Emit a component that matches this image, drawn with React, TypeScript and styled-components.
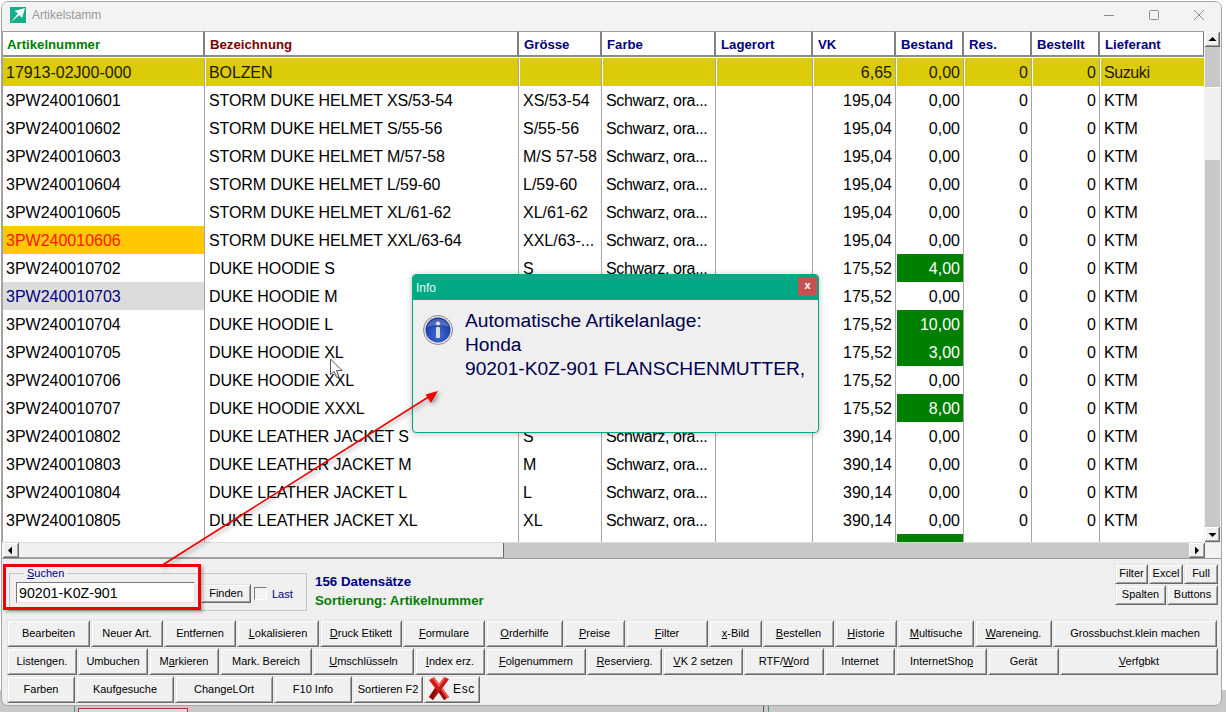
import React from 'react';
import styled, { createGlobalStyle } from 'styled-components';

const GlobalStyle = createGlobalStyle`
  html, body {
    margin: 0;
    padding: 0;
    background: #fff;
    font-family: "Liberation Sans", Arial, sans-serif;
  }
`;

const COLUMNS = '202px 314px 83px 114px 97px 83px 68px 68px 68px 105px';

const Page = styled.div`
  position: relative;
  width: 1226px;
  height: 712px;
  overflow: hidden;
  padding-top: 1px;
  box-sizing: border-box;
  background: linear-gradient(#fff 0, #fff 690px, #c8c8c8 690px);
`;

const Window = styled.div`
  box-sizing: border-box;
  width: 1221px;
  height: 705px;
  margin-left: 1px;
  display: flex;
  flex-direction: column;
  border: 1px solid #a6a6a6;
  border-radius: 7px;
  overflow: hidden;
  background: #efefef;
`;

const TitleBar = styled.div`
  height: 29px;
  box-sizing: border-box;
  flex: none;
  display: flex;
  align-items: center;
  padding: 0 17px 3px 8px;
  background: #f3f3f3;
  color: #9a9a9a;
  font-size: 12px;
`;

const TitleText = styled.span`
  margin-left: 6px;
`;

const WindowControls = styled.div`
  margin-left: auto;
  display: flex;
  gap: 35px;
  align-items: center;
`;

const GridBody = styled.div`
  height: 511px;
  flex: none;
  display: flex;
`;

const List = styled.div`
  width: 1202px;
  box-sizing: border-box;
  border-left: 1px solid #a0a0a0;
  background: #fff;
  overflow: hidden;
`;

const HeaderRow = styled.div`
  display: grid;
  grid-template-columns: ${COLUMNS};
  height: 26px;
  margin-bottom: 1px;
`;

const HeaderCell = styled.div<{ $color: string }>`
  box-sizing: border-box;
  padding: 3px 0 0 4px;
  border-top: 1px solid #a0a0a0;
  border-bottom: 2px solid #8c8c8c;
  border-right: 2px solid #808080;
  color: ${p => p.$color};
  font-size: 13.2px;
  font-weight: 700;
  line-height: 20px;
  white-space: nowrap;
  &:not(:first-child) {
    padding-left: 5px;
  }
`;

const Row = styled.div`
  display: grid;
  grid-template-columns: ${COLUMNS};
  height: 28px;
`;

type Tone = 'plain' | 'yellow' | 'orange' | 'grey' | 'green';

const toneBg: Record<Tone, string> = {
  plain: '#fff',
  yellow: '#dccb08',
  orange: '#ffc800',
  grey: '#dcdcdc',
  green: '#008000',
};

const toneText: Record<Tone, string> = {
  plain: '#000',
  yellow: '#1c1a00',
  orange: '#ff1400',
  grey: '#000080',
  green: '#fff',
};

const Cell = styled.div<{ $tone: Tone; $right?: boolean; $track?: number }>`
  box-sizing: border-box;
  height: 28px;
  padding: 0 3px;
  border-right: 1px solid #a6a6a6;
  border-left: 1px solid #fff;
  background: ${p => toneBg[p.$tone]};
  background-clip: padding-box;
  color: ${p => toneText[p.$tone]};
  font-size: 16px;
  letter-spacing: ${p => p.$track ?? 0}px;
  line-height: 30px;
  white-space: nowrap;
  overflow: hidden;
  text-align: ${p => (p.$right ? 'right' : 'left')};
  &:first-child {
    border-left: 0;
    padding-left: 3px;
  }
`;

const VScroll = styled.div`
  width: 17px;
  box-sizing: border-box;
  padding: 1px 1px 0 1px;
  display: flex;
  flex-direction: column;
  background: #f2f2f2;
`;

const ScrollButton = styled.div<{ $size?: number }>`
  box-sizing: border-box;
  width: ${p => p.$size ?? 15}px;
  height: 15px;
  flex: none;
  display: flex;
  align-items: center;
  justify-content: center;
  background: #f0f0f0;
  border-right: 1px solid #696969;
  border-bottom: 1px solid #696969;
  box-shadow: inset 1px 1px 0 #fff, inset -1px -1px 0 #a0a0a0;
`;

const VTrack = styled.div`
  flex: 1;
  background: #c8c8c8;
  padding-top: 40px;
`;

const VThumb = styled.div`
  height: 73px;
  background: #f0f0f0;
  border-top: 1px solid #fff;
  box-sizing: border-box;
`;

const HScroll = styled.div`
  height: 17px;
  flex: none;
  box-sizing: border-box;
  display: flex;
  padding-left: 1px;
  border-top: 1px solid #dcdcdc;
  border-bottom: 1px solid #9c9c9c;
  background: #f2f2f2;
`;

const HThumb = styled.div`
  width: 485px;
  box-sizing: border-box;
  background: #f0f0f0;
  border-right: 1px solid #696969;
  border-bottom: 1px solid #a0a0a0;
`;

const HTrack = styled.div`
  width: 685px;
  background: #c8c8c8;
`;

const ControlArea = styled.div`
  height: 61px;
  flex: none;
  display: flex;
  align-items: flex-start;
  padding: 0 3px 0 7px;
`;

const SearchGroup = styled.fieldset`
  box-sizing: border-box;
  width: 298px;
  height: 44px;
  margin: 8px 0 0;
  padding: 2px 0 0 6px;
  display: flex;
  align-items: flex-start;
  border: 1px solid #c4c4c4;
  min-inline-size: 0;
`;

const SearchLegend = styled.legend`
  margin-left: 8px;
  padding: 0 3px;
  color: #000080;
  font-size: 11px;
  line-height: 13px;
`;

const SearchInput = styled.input`
  box-sizing: border-box;
  width: 179px;
  height: 21px;
  padding: 0 2px;
  border: 0;
  border-top: 1px solid #7a7a7a;
  border-left: 1px solid #7a7a7a;
  border-right: 1px solid #e4e4e4;
  border-bottom: 1px solid #e4e4e4;
  background: #fff;
  color: #000;
  font-family: "Liberation Sans", Arial, sans-serif;
  font-size: 14.2px;
  outline: none;
`;

const Button = styled.button<{ $w: number; $h?: number }>`
  box-sizing: border-box;
  width: ${p => p.$w}px;
  height: ${p => p.$h ?? 27}px;
  flex: none;
  padding: 0 0 2px;
  border: 0;
  border-right: 1px solid #696969;
  border-bottom: 1px solid #696969;
  border-left: 1px solid #e4e4e4;
  border-top: 1px solid #e4e4e4;
  box-shadow: inset 1px 1px 0 #fff, inset -1px -1px 0 #a0a0a0;
  background: #f0f0f0;
  color: #000;
  font-family: "Liberation Sans", Arial, sans-serif;
  font-size: 11px;
  white-space: nowrap;
`;

const EscButton = styled(Button)`
  display: flex;
  align-items: center;
  justify-content: center;
  gap: 4px;
`;

const FindButton = styled(Button)`
  margin: 2px 0 0 6px;
`;

const LastBox = styled.input`
  appearance: none;
  box-sizing: border-box;
  width: 13px;
  height: 13px;
  margin: 5px 0 0 3px;
  border: 1px solid #fff;
  border-top-color: #7a7a7a;
  border-left-color: #7a7a7a;
  background: #f4f4f4;
`;

const LastLabel = styled.span`
  margin: 6px 0 0 5px;
  color: #000080;
  font-size: 11px;
`;

const InfoBlock = styled.div`
  margin: 14px 0 0 8px;
  font-size: 13.3px;
  font-weight: 700;
  line-height: 18.5px;
`;

const InfoLine = styled.div<{ $color: string }>`
  color: ${p => p.$color};
`;

const SmallButtons = styled.div`
  margin: 5px 0 0 auto;
  display: flex;
  flex-direction: column;
  gap: 1px;
`;

const ButtonRows = styled.div`
  display: flex;
  flex-direction: column;
  gap: 1px;
  padding-left: 5px;
`;

const ButtonRow = styled.div<{ $right?: boolean }>`
  display: flex;
  gap: 1px;
  justify-content: ${p => (p.$right ? 'flex-end' : 'flex-start')};
`;

const EscLabel = styled.span`
  font-size: 12px;
  letter-spacing: 0.6px;
`;

const BehindStrip = styled.div`
  height: 6px;
  display: flex;
`;

const StripLine = styled.div<{ $gap: number; $color: string }>`
  width: 1px;
  margin-left: ${p => p.$gap}px;
  background: ${p => p.$color};
`;

const StripBox = styled.div`
  width: 108px;
  height: 4px;
  margin: 2px 0 0 3px;
  border: 1px solid #a83a3a;
  border-bottom: 0;
  background: #dcdcdc;
`;

/* things lying over the window */
const Dialog = styled.div`
  position: absolute;
  left: 412px;
  top: 274px;
  width: 407px;
  height: 159px;
  box-sizing: border-box;
  border: 1px solid #00a884;
  border-radius: 4px;
  background: #efefef;
  box-shadow: 0 1px 6px rgba(0, 0, 0, 0.25);
  overflow: hidden;
`;

const DialogTitle = styled.div`
  height: 25px;
  display: flex;
  justify-content: space-between;
  padding-left: 3px;
  background: #00a884;
  color: #eafaf5;
  font-size: 12px;
  line-height: 27px;
`;

const DialogClose = styled.div`
  width: 19px;
  height: 19px;
  margin: 2px 1px 0 0;
  background: #c75050;
  color: #fff;
  font-size: 11px;
  font-weight: 700;
  line-height: 17px;
  text-align: center;
`;

const DialogBody = styled.div`
  display: flex;
  gap: 12px;
  padding: 9px 0 0 10px;
`;

const DialogIcon = styled.svg`
  margin-top: 6px;
  flex: none;
`;

const DialogText = styled.div`
  color: #000050;
  font-size: 19.2px;
  line-height: 24px;
  white-space: nowrap;
`;

const RedBox = styled.div`
  position: absolute;
  left: 3px;
  top: 564px;
  width: 198px;
  height: 46px;
  box-sizing: border-box;
  border: 3px solid #f00000;
  box-shadow: 2px 2px 3px rgba(0, 0, 0, 0.3);
`;

const ArrowLayer = styled.svg`
  position: absolute;
  left: 0;
  top: 0;
  pointer-events: none;
  filter: drop-shadow(2px 2px 2px rgba(0, 0, 0, 0.35));
`;

const MouseCursor = styled.svg`
  position: absolute;
  left: 329px;
  top: 358px;
`;

const headers = [
  ['Artikelnummer', '#008000'],
  ['Bezeichnung', '#800000'],
  ['Grösse', '#000080'],
  ['Farbe', '#000080'],
  ['Lagerort', '#000080'],
  ['VK', '#000080'],
  ['Bestand', '#000080'],
  ['Res.', '#000080'],
  ['Bestellt', '#000080'],
  ['Lieferant', '#000080'],
];

type Article = {
  id: string;
  name: string;
  size: string;
  color?: string;
  vk: string;
  stock: string;
  supplier?: string;
  idTone?: Tone;
  rowTone?: Tone;
};

const farbe = 'Schwarz, ora...';

// size and colour of the rows behind the dialog are left out, they can't be seen
const articles: Article[] = [
  { id: '17913-02J00-000', name: 'BOLZEN', size: '', color: '', vk: '6,65', stock: '0,00', supplier: 'Suzuki', rowTone: 'yellow' },
  { id: '3PW240010601', name: 'STORM DUKE HELMET XS/53-54', size: 'XS/53-54', vk: '195,04', stock: '0,00' },
  { id: '3PW240010602', name: 'STORM DUKE HELMET S/55-56', size: 'S/55-56', vk: '195,04', stock: '0,00' },
  { id: '3PW240010603', name: 'STORM DUKE HELMET M/57-58', size: 'M/S 57-58', vk: '195,04', stock: '0,00' },
  { id: '3PW240010604', name: 'STORM DUKE HELMET L/59-60', size: 'L/59-60', vk: '195,04', stock: '0,00' },
  { id: '3PW240010605', name: 'STORM DUKE HELMET XL/61-62', size: 'XL/61-62', vk: '195,04', stock: '0,00' },
  { id: '3PW240010606', name: 'STORM DUKE HELMET XXL/63-64', size: 'XXL/63-...', vk: '195,04', stock: '0,00', idTone: 'orange' },
  { id: '3PW240010702', name: 'DUKE HOODIE S', size: 'S', vk: '175,52', stock: '4,00' },
  { id: '3PW240010703', name: 'DUKE HOODIE M', size: '', color: '', vk: '175,52', stock: '0,00', idTone: 'grey' },
  { id: '3PW240010704', name: 'DUKE HOODIE L', size: '', color: '', vk: '175,52', stock: '10,00' },
  { id: '3PW240010705', name: 'DUKE HOODIE XL', size: '', color: '', vk: '175,52', stock: '3,00' },
  { id: '3PW240010706', name: 'DUKE HOODIE XXL', size: '', color: '', vk: '175,52', stock: '0,00' },
  { id: '3PW240010707', name: 'DUKE HOODIE XXXL', size: '', color: '', vk: '175,52', stock: '8,00' },
  { id: '3PW240010802', name: 'DUKE LEATHER JACKET S', size: 'S', vk: '390,14', stock: '0,00' },
  { id: '3PW240010803', name: 'DUKE LEATHER JACKET M', size: 'M', vk: '390,14', stock: '0,00' },
  { id: '3PW240010804', name: 'DUKE LEATHER JACKET L', size: 'L', vk: '390,14', stock: '0,00' },
  { id: '3PW240010805', name: 'DUKE LEATHER JACKET XL', size: 'XL', vk: '390,14', stock: '0,00' },
];

type Btn = [React.ReactNode, number];

const row1: Btn[] = [
  ['Bearbeiten', 83],
  ['Neuer Art.', 72],
  ['Entfernen', 72],
  [<><u>L</u>okalisieren</>, 82],
  [<><u>D</u>ruck Etikett</>, 82],
  [<><u>F</u>ormulare</>, 82],
  [<><u>O</u>rderhilfe</>, 77],
  [<><u>P</u>reise</>, 61],
  [<><u>F</u>ilter</>, 82],
  [<><u>x</u>-Bild</>, 53],
  [<><u>B</u>estellen</>, 71],
  [<><u>H</u>istorie</>, 62],
  [<><u>M</u>ultisuche</>, 76],
  [<><u>W</u>areneing.</>, 77],
  ['Grossbuchst.klein machen', 164],
];

const row2: Btn[] = [
  [<>Listen<u>g</u>en.</>, 70],
  ['Umbuchen', 70],
  [<>M<u>a</u>rkieren</>, 70],
  ['Mark. Bereich', 92],
  [<><u>U</u>mschlüsseln</>, 101],
  [<><u>I</u>ndex erz.</>, 70],
  [<><u>F</u>olgenummern</>, 100],
  [<><u>R</u>eservierg.</>, 75],
  [<><u>V</u>K 2 setzen</>, 80],
  [<>RTF/<u>W</u>ord</>, 80],
  ['Internet', 70],
  [<>InternetSho<u>p</u></>, 91],
  ['Gerät', 71],
  [<><u>V</u>erfgbkt</>, 158],
];

const row3: Btn[] = [
  ['Farben', 68],
  ['Kaufgesuche', 98],
  ['ChangeLOrt', 98],
  ['F10 Info', 78],
  ['Sortieren F2', 70],
];

const Triangle = ({ points }: { points: string }) => (
  <svg width="9" height="9" viewBox="0 0 9 9">
    <polygon points={points} fill="#000" />
  </svg>
);

const ArticleRow = ({ a }: { a: Article }) => {
  const base: Tone = a.rowTone ?? 'plain';
  const qty = parseInt(a.stock, 10);
  return (
    <Row>
      <Cell $tone={a.idTone ?? base}>{a.id}</Cell>
      <Cell $tone={base} $track={-0.11}>{a.name}</Cell>
      <Cell $tone={base}>{a.size}</Cell>
      <Cell $tone={base} $track={-0.35}>{a.color ?? farbe}</Cell>
      <Cell $tone={base} />
      <Cell $tone={base} $right>{a.vk}</Cell>
      <Cell $tone={qty > 0 ? 'green' : base} $right>{a.stock}</Cell>
      <Cell $tone={base} $right>0</Cell>
      <Cell $tone={base} $right>0</Cell>
      <Cell $tone={base} $track={a.supplier ? -0.4 : 0}>{a.supplier ?? 'KTM'}</Cell>
    </Row>
  );
};

export default function App() {
  return (
    <>
      <GlobalStyle />
      <Page>
        <Window>
          <TitleBar>
            <svg width="16" height="16" viewBox="0 0 16 16">
              <rect width="16" height="16" fill="#16ad8c" />
              <path d="M15 1 L4.5 4 L8 6.5 L1 15 L9.5 8 L12 11 Z" fill="#fff" />
            </svg>
            <TitleText>Artikelstamm</TitleText>
            <WindowControls>
              <svg width="10" height="10" viewBox="0 0 10 10">
                <path d="M0 5.5 H10" stroke="#8c8c8c" />
              </svg>
              <svg width="10" height="10" viewBox="0 0 10 10">
                <rect x="0.5" y="0.5" width="9" height="9" rx="1" fill="none" stroke="#8c8c8c" />
              </svg>
              <svg width="10" height="10" viewBox="0 0 10 10">
                <path d="M0 0 L10 10 M10 0 L0 10" stroke="#8c8c8c" />
              </svg>
            </WindowControls>
          </TitleBar>

          <GridBody>
            <List>
              <HeaderRow>
                {headers.map(([label, color]) => (
                  <HeaderCell key={label} $color={color}>{label}</HeaderCell>
                ))}
              </HeaderRow>
              {articles.map(a => (
                <ArticleRow key={a.id} a={a} />
              ))}
              <Row>
                <Cell $tone="plain" />
                <Cell $tone="plain" />
                <Cell $tone="plain" />
                <Cell $tone="plain" />
                <Cell $tone="plain" />
                <Cell $tone="plain" />
                <Cell $tone="green" />
                <Cell $tone="plain" />
                <Cell $tone="plain" />
                <Cell $tone="plain" />
              </Row>
            </List>
            <VScroll>
              <ScrollButton>
                <Triangle points="0.5,6 4.5,2 8.5,6" />
              </ScrollButton>
              <VTrack>
                <VThumb />
              </VTrack>
              <ScrollButton>
                <Triangle points="0.5,3 4.5,7 8.5,3" />
              </ScrollButton>
            </VScroll>
          </GridBody>

          <HScroll>
            <ScrollButton $size={16}>
              <Triangle points="6,0.5 2,4.5 6,8.5" />
            </ScrollButton>
            <HThumb />
            <HTrack />
            <ScrollButton $size={16}>
              <Triangle points="3,0.5 7,4.5 3,8.5" />
            </ScrollButton>
          </HScroll>

          <ControlArea>
            <SearchGroup>
              <SearchLegend><u>S</u>uchen</SearchLegend>
              <SearchInput readOnly value="90201-K0Z-901" />
              <FindButton $w={50} $h={19}>Finden</FindButton>
              <LastBox type="checkbox" />
              <LastLabel>Last</LastLabel>
            </SearchGroup>
            <InfoBlock>
              <InfoLine $color="#000080">156 Datensätze</InfoLine>
              <InfoLine $color="#008000">Sortierung: Artikelnummer</InfoLine>
            </InfoBlock>
            <SmallButtons>
              <ButtonRow>
                <Button $w={33} $h={20}>Filter</Button>
                <Button $w={34} $h={20}>Excel</Button>
                <Button $w={34} $h={20}>Full</Button>
              </ButtonRow>
              <ButtonRow $right>
                <Button $w={51} $h={20}>Spalten</Button>
                <Button $w={51} $h={20}>Buttons</Button>
              </ButtonRow>
            </SmallButtons>
          </ControlArea>

          <ButtonRows>
            <ButtonRow>
              {row1.map(([label, w], i) => <Button key={i} $w={w}>{label}</Button>)}
            </ButtonRow>
            <ButtonRow>
              {row2.map(([label, w], i) => <Button key={i} $w={w}>{label}</Button>)}
            </ButtonRow>
            <ButtonRow>
              {row3.map(([label, w], i) => <Button key={i} $w={w}>{label}</Button>)}
              <EscButton $w={56}>
                <svg width="20" height="23" viewBox="0 0 20 23">
                  <path d="M0 3 L5 0 L10 7 L15 0 L20 2 L13.5 11 L20 20 L15 23 L10 15.5 L4 23 L0 20 L6 11 Z" fill="#d01818" />
                  <path d="M0 3 L5 0 L10 7 L15 0 L16.5 1 L10 10 L4 2 Z M13.5 11 L20 20 L18.5 21 L12 12 Z" fill="#f06060" />
                  <path d="M4 23 L0 20 L6 11 L8 14 Z M15 23 L10 15.5 L11.5 13 L17 22 Z" fill="#8c0c0c" />
                </svg>
                <EscLabel>Esc</EscLabel>
              </EscButton>
            </ButtonRow>
          </ButtonRows>
        </Window>

        <BehindStrip>
          <StripLine $gap={74} $color="#3a9a88" />
          <StripBox />
          <StripLine $gap={575} $color="#555" />
          <StripLine $gap={4} $color="#3a9a88" />
        </BehindStrip>

        <MouseCursor width="15" height="21" viewBox="0 0 15 21">
          <path d="M1.5 1 V16.5 L5 13.5 L7.5 19.5 L10 18.5 L7.5 12.5 L13 12.5 Z" fill="rgba(255,255,255,0.75)" stroke="#555" strokeWidth="1" />
        </MouseCursor>

        <Dialog>
          <DialogTitle>
            Info
            <DialogClose>x</DialogClose>
          </DialogTitle>
          <DialogBody>
            <DialogIcon width="30" height="30" viewBox="0 0 30 30">
              <defs>
                <radialGradient id="infoBlue" cx="50%" cy="70%" r="70%">
                  <stop offset="0%" stopColor="#3f6fd8" />
                  <stop offset="100%" stopColor="#12309a" />
                </radialGradient>
              </defs>
              <circle cx="15" cy="15" r="14.5" fill="#e4e4e4" stroke="#8a8a8a" />
              <circle cx="15" cy="15" r="12.5" fill="url(#infoBlue)" />
              <path d="M4 12 A11.5 11.5 0 0 1 26 12 Q15 8 4 12 Z" fill="rgba(255,255,255,0.22)" />
              <circle cx="15" cy="8.5" r="2" fill="#e8e8e8" />
              <rect x="13" y="12" width="4" height="11" rx="1" fill="#dcdcdc" />
            </DialogIcon>
            <DialogText>
              Automatische Artikelanlage:<br />
              Honda<br />
              90201-K0Z-901 FLANSCHENMUTTER,
            </DialogText>
          </DialogBody>
        </Dialog>

        <RedBox />
        <ArrowLayer width="1226" height="712" viewBox="0 0 1226 712">
          <line x1="161" y1="566" x2="430" y2="396" stroke="#f00000" strokeWidth="1.6" />
          <polygon points="438,391 425.5,394.5 431,403" fill="#f00000" />
        </ArrowLayer>
      </Page>
    </>
  );
}
